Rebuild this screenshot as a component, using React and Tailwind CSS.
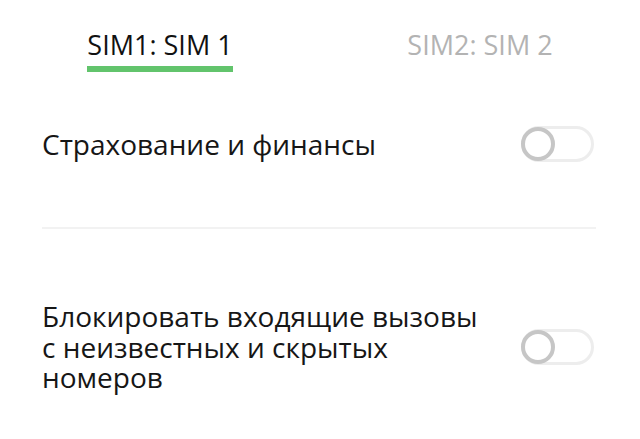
import React, { useState } from 'react';

const Toggle = ({ on, onChange }) => (
  <button
    onClick={onChange}
    className="relative w-[73px] h-[36px] shrink-0 rounded-full border-[3px] border-[#ededed] bg-white"
  >
    <span className="absolute left-[-3px] top-[-2px] w-[34px] h-[34px] rounded-full border-[4px] border-[#c6c6c6] bg-white" />
  </button>
);

const App = () => {
  const [tab, setTab] = useState(0);
  const [finance, setFinance] = useState(false);
  const [block, setBlock] = useState(false);

  const tabs = ['SIM1: SIM 1', 'SIM2: SIM 2'];

  return (
    <div className="w-[640px] h-[439px] bg-white overflow-hidden font-medium" style={{ fontFamily: '"Open Sans", "Noto Sans", sans-serif' }}>
      {/* Tabs */}
      <div className="flex h-[76px]">
        {tabs.map((t, i) => (
          <button key={t} onClick={() => setTab(i)} className="flex-1 flex justify-center pt-[26px]">
            <div className="flex flex-col items-stretch">
              <span className={`text-[27px] leading-[38px] ${tab === i ? 'text-[#111111]' : 'text-[#b3b3b3]'}`}>{t}</span>
              <span className={`h-[6px] mt-[2px] ${tab === i ? 'bg-[#62c46c]' : 'bg-transparent'}`} />
            </div>
          </button>
        ))}
      </div>

      {/* Rows */}
      <div className="pl-[42px] pr-[46px]">
        <div className="flex items-center justify-between pt-[50px] pb-[65px]">
          <span className="text-[28px] leading-[36px] text-[#161616]">Страхование и финансы</span>
          <Toggle on={finance} onChange={() => setFinance(!finance)} />
        </div>
        <div className="h-[2px] bg-[#f2f2f2] mr-[-2px]" />
        <div className="flex items-center justify-between pt-[72px]">
          <span className="text-[28px] leading-[30.5px] text-[#161616] w-[445px]">
            Блокировать входящие вызовы с неизвестных и скрытых номеров
          </span>
          <Toggle on={block} onChange={() => setBlock(!block)} />
        </div>
      </div>
    </div>
  );
};

export default App;
